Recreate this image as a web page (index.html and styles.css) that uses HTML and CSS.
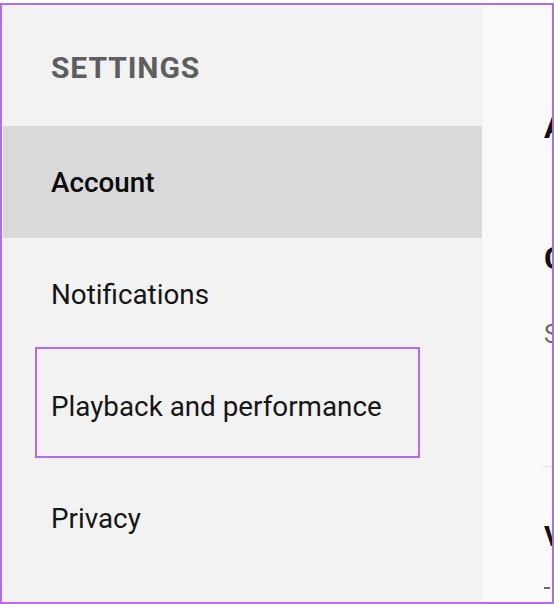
FILE: index.html
```html
<!DOCTYPE html>
<html lang="en">
<head>
<meta charset="utf-8">
<title>Settings</title>
<link rel="stylesheet" href="styles.css">
</head>
<body>
<div class="frame">
  <nav class="sidebar">
    <div class="sidebar-title">SETTINGS</div>
    <div class="nav-item active">Account</div>
    <div class="nav-item">Notifications</div>
    <div class="nav-item highlighted">Playback and performance<span class="callout"></span></div>
    <div class="nav-item">Privacy</div>
  </nav>
  <main class="content">
    <h1 class="page-title">Account</h1>
    <h2 class="section-title">Connected accounts</h2>
    <p class="section-sub">Sign in to sync your library</p>
    <hr class="divider">
    <h2 class="section-title second">Verification</h2>
    <div class="dash"></div>
  </main>
</div>
</body>
</html>
```

FILE: styles.css
```css
* { box-sizing: border-box; }

html, body {
  margin: 0;
  padding: 0;
  background: #ffffff;
}

body {
  font-family: Roboto, "Liberation Sans", sans-serif;
}

.frame {
  margin-top: 3px;
  width: 554px;
  height: 601px;
  border: 2px solid #b46ce8;
  display: flex;
  overflow: hidden;
  background: #f9f9f9;
}

.sidebar {
  width: 480px;
  flex: none;
  background: #f2f2f2;
  display: flex;
  flex-direction: column;
  padding-left: 1px;
}

.sidebar-title {
  height: 121px;
  display: flex;
  align-items: center;
  padding-left: 48px;
  padding-top: 3px;
  font-size: 30px;
  font-weight: 700;
  letter-spacing: 0.9px;
  color: #5e5e5e;
}

.nav-item {
  position: relative;
  height: 112px;
  display: flex;
  align-items: center;
  padding-left: 48px;
  font-size: 27.8px;
  color: #161616;
}

.nav-item.active {
  background: #d9d9d9;
  font-weight: 500;
  color: #0a0a0a;
}

.callout {
  position: absolute;
  left: 32px;
  top: -3px;
  width: 385px;
  height: 111px;
  border: 2px solid #b46ce8;
}

.content {
  flex: 1;
  padding-left: 62px;
  white-space: nowrap;
  overflow: hidden;
}

.page-title {
  margin: 103px 0 0 0;
  font-size: 31px;
  font-weight: 700;
  line-height: 40px;
  color: #111111;
}

.section-title {
  margin: 90px 0 0 0;
  font-size: 32px;
  font-weight: 700;
  line-height: 40px;
  color: #111111;
}

.section-sub {
  margin: 42px 0 0 0;
  font-size: 25px;
  line-height: 30px;
  color: #6a6a6a;
}

.divider {
  margin: 116px 0 0 -2px;
  border: none;
  border-top: 1px solid #e2e2e2;
}

.section-title.second {
  margin-top: 50px;
  font-size: 28px;
}

.dash {
  margin-top: 30px;
  width: 6px;
  height: 2px;
  background: #6a6a6a;
}
```
